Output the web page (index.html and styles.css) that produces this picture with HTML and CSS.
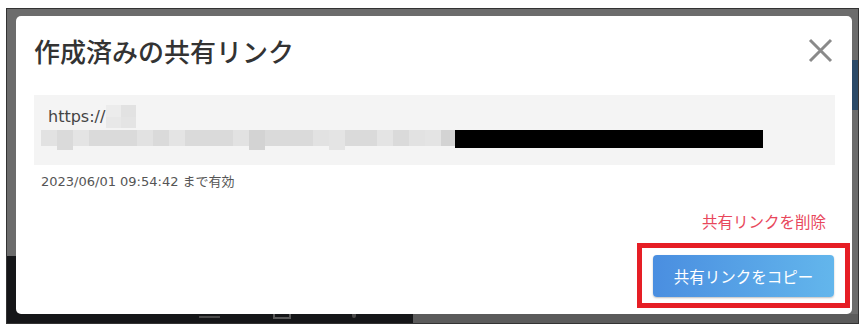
FILE: index.html
```html
<!DOCTYPE html>
<html lang="ja">
<head>
  <meta charset="UTF-8">
  <title>作成済みの共有リンク</title>
  <link rel="stylesheet" href="styles.css">
</head>
<body>

<div class="screen">
  <div class="share-dialog">
    <div class="dialog-head">
      <h1 class="dialog-title">作成済みの共有リンク</h1>
      <span class="close-btn">
        <svg width="25" height="25" viewBox="0 0 25 25">
          <path d="M2 2 L23 23 M23 2 L2 23" stroke="#8a8a8a" stroke-width="3" fill="none"/>
        </svg>
      </span>
    </div>

    <div class="link-box">
      <div class="link-line">
        <span class="link-text">https://</span>
        <span class="blur-cell">
          <i class="c1"></i><i class="c2"></i><i class="c3"></i><i class="c4"></i>
        </span>
      </div>
      <div class="link-line second">
        <i class="px a"></i><i class="px b tall"></i><i class="px c"></i><i class="px b"></i>
        <i class="px b"></i><i class="px b"></i><i class="px a"></i><i class="px b"></i>
        <i class="px c"></i><i class="px b"></i><i class="px b"></i><i class="px b"></i>
        <i class="px a"></i><i class="px d tall"></i><i class="px b"></i><i class="px b"></i>
        <i class="px b"></i><i class="px a"></i><i class="px c tall"></i><i class="px b"></i>
        <i class="px b"></i><i class="px c"></i><i class="px b"></i><i class="px a"></i>
        <i class="px c"></i><i class="px d"></i>
        <i class="redact"></i>
      </div>
    </div>

    <div class="expire-text">2023/06/01 09:54:42 まで有効</div>

    <a href="javascript:;" class="delete-link">共有リンクを削除</a>

    <div class="highlight">
      <button class="copy-btn">共有リンクをコピー</button>
    </div>
  </div>

  <div class="taskbar">
    <div class="taskbar-dark">
      <span class="tb-dash"></span>
      <span class="tb-box"></span>
      <span class="tb-dot"></span>
    </div>
    <div class="taskbar-light"></div>
  </div>
</div>

</body>
</html>
```

FILE: styles.css
```css
body {
  margin: 0;
  background: #fff;
  font-family: "DejaVu Sans", "Noto Sans CJK JP", sans-serif;
}

/* 後ろの画面（暗くなった背景） */
.screen {
  box-sizing: border-box;
  width: 853px;
  height: 316px;
  margin: 8px 0 0 6px;
  padding: 7px 6px 0 9px;
  border: 1px solid #333;
  background:
    linear-gradient(#151618, #151618) left bottom / 406px 67px no-repeat,
    linear-gradient(#2b4a68, #2b4a68) right 0 top 51px / 7px 50px no-repeat,
    #6c6c6c;
  display: flex;
  flex-direction: column;
}

.share-dialog {
  box-sizing: border-box;
  height: 298px;
  padding: 17px 17px 0 18px;
  background: #fff;
  border-radius: 5px;
  display: flex;
  flex-direction: column;
}

.dialog-head {
  display: flex;
  align-items: center;
  justify-content: space-between;
  height: 36px;
}

.dialog-title {
  margin: 0;
  font-family: "Noto Sans CJK JP", sans-serif;
  font-size: 26px;
  font-weight: 500;
  line-height: 36px;
  color: #333;
}

.close-btn {
  display: flex;
  margin-right: 2px;
  margin-top: -1px;
  cursor: pointer;
}

.link-box {
  margin-top: 26px;
  height: 70px;
  box-sizing: border-box;
  padding: 10px 14px 0 7px;
  background: #f4f4f4;
}

.link-line {
  display: flex;
  align-items: center;
  height: 23px;
}

.link-line.second {
  align-items: flex-start;
  height: 20px;
  margin-top: 2px;
}

.link-text {
  padding-left: 7px;
  font-size: 16px;
  color: #444;
}

.blur-cell {
  display: grid;
  grid-template-columns: 15px 15px;
  grid-template-rows: 12px 11px;
  margin-left: 1px;
}

.blur-cell i { display: block; }
.blur-cell .c1 { background: #ececec; }
.blur-cell .c2 { background: #e2e2e2; }
.blur-cell .c3 { background: #e8e8e8; }
.blur-cell .c4 { background: #e4e4e4; }

.px {
  display: block;
  width: 16px;
  height: 16px;
}

.px.tall { height: 20px; }
.px.a { background: #e2e2e2; }
.px.b { background: #dadada; }
.px.c { background: #e4e4e4; }
.px.d { background: #d3d3d3; }

.redact {
  display: block;
  width: 308px;
  height: 18px;
  margin-left: -2px;
  background: #000;
}

.expire-text {
  margin: 8px 0 0 7px;
  font-size: 13px;
  line-height: 18px;
  color: #555;
}

.delete-link {
  align-self: flex-end;
  margin: 19px 9px 0 0;
  font-family: "Noto Sans CJK JP", sans-serif;
  font-size: 15.5px;
  line-height: 22px;
  color: #e8475b;
  text-decoration: none;
}

/* 赤枠の注記 */
.highlight {
  align-self: flex-end;
  margin: 11px -15px 0 0;
  padding: 7px 11px 6px;
  border: 5px solid #e61e25;
}

.copy-btn {
  display: block;
  width: 181px;
  height: 42px;
  border: none;
  outline: none;
  border-radius: 4px;
  background: linear-gradient(90deg, #4a8ee0, #63b6ec);
  box-shadow: 0 1px 2px rgba(0, 0, 0, 0.25);
  color: #fff;
  font-family: "Noto Sans CJK JP", sans-serif;
  font-size: 15.5px;
  cursor: pointer;
}

.taskbar {
  display: flex;
  height: 9px;
  margin: 0 -6px 0 -9px;
}

.taskbar-dark {
  width: 406px;
  background: #151618;
  display: flex;
  align-items: flex-start;
}

.taskbar-light {
  flex: 1;
  background: #5b5b5b;
}

.tb-dash {
  width: 21px;
  height: 2px;
  margin: 2px 0 0 192px;
  background: #4a4a4a;
}

.tb-box {
  width: 14px;
  height: 3px;
  margin-left: 53px;
  border: 2px solid #5a5a5a;
  border-top: none;
}

.tb-dot {
  width: 4px;
  height: 4px;
  margin-left: 61px;
  border-radius: 0 0 2px 2px;
  background: #4a4a4a;
}
```
